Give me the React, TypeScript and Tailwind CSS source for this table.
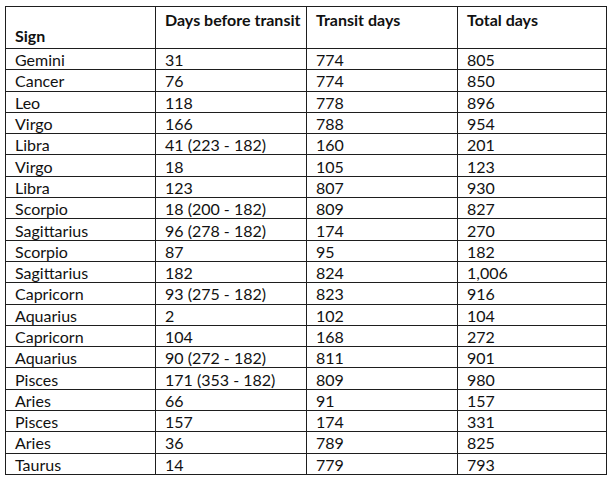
const rows: [string, string, string, string][] = [
  ["Gemini", "31", "774", "805"],
  ["Cancer", "76", "774", "850"],
  ["Leo", "118", "778", "896"],
  ["Virgo", "166", "788", "954"],
  ["Libra", "41 (223 - 182)", "160", "201"],
  ["Virgo", "18", "105", "123"],
  ["Libra", "123", "807", "930"],
  ["Scorpio", "18 (200 - 182)", "809", "827"],
  ["Sagittarius", "96 (278 - 182)", "174", "270"],
  ["Scorpio", "87", "95", "182"],
  ["Sagittarius", "182", "824", "1,006"],
  ["Capricorn", "93 (275 - 182)", "823", "916"],
  ["Aquarius", "2", "102", "104"],
  ["Capricorn", "104", "168", "272"],
  ["Aquarius", "90 (272 - 182)", "811", "901"],
  ["Pisces", "171 (353 - 182)", "809", "980"],
  ["Aries", "66", "91", "157"],
  ["Pisces", "157", "174", "331"],
  ["Aries", "36", "789", "825"],
  ["Taurus", "14", "779", "793"],
];

const cell = "border border-[#1e1e1e] pl-[9px] pr-1 leading-none";

export default function App() {
  return (
    <div className="w-[610px] h-[482px] bg-white pt-[6px] pl-[5px] font-['Lato','Liberation_Sans',sans-serif] text-[16px] text-[#111]">
      <table className="border-collapse table-fixed w-[601px]">
        <colgroup>
          <col className="w-[150px]" />
          <col className="w-[151px]" />
          <col className="w-[151px]" />
          <col className="w-[149px]" />
        </colgroup>
        <thead>
          <tr className="h-[42px] font-bold">
            <th className={`${cell} text-left align-bottom pb-[4px]`}>Sign</th>
            <th className={`${cell} text-left align-top pt-[5px]`}>Days before transit</th>
            <th className={`${cell} text-left align-top pt-[5px]`}>Transit days</th>
            <th className={`${cell} text-left align-top pt-[5px]`}>Total days</th>
          </tr>
        </thead>
        <tbody>
          {rows.map((r, i) => (
            <tr key={i} className="h-[21.3px]">
              {r.map((v, j) => (
                <td key={j} className={`${cell} pt-[2px]`}>
                  {v}
                </td>
              ))}
            </tr>
          ))}
        </tbody>
      </table>
    </div>
  );
}
